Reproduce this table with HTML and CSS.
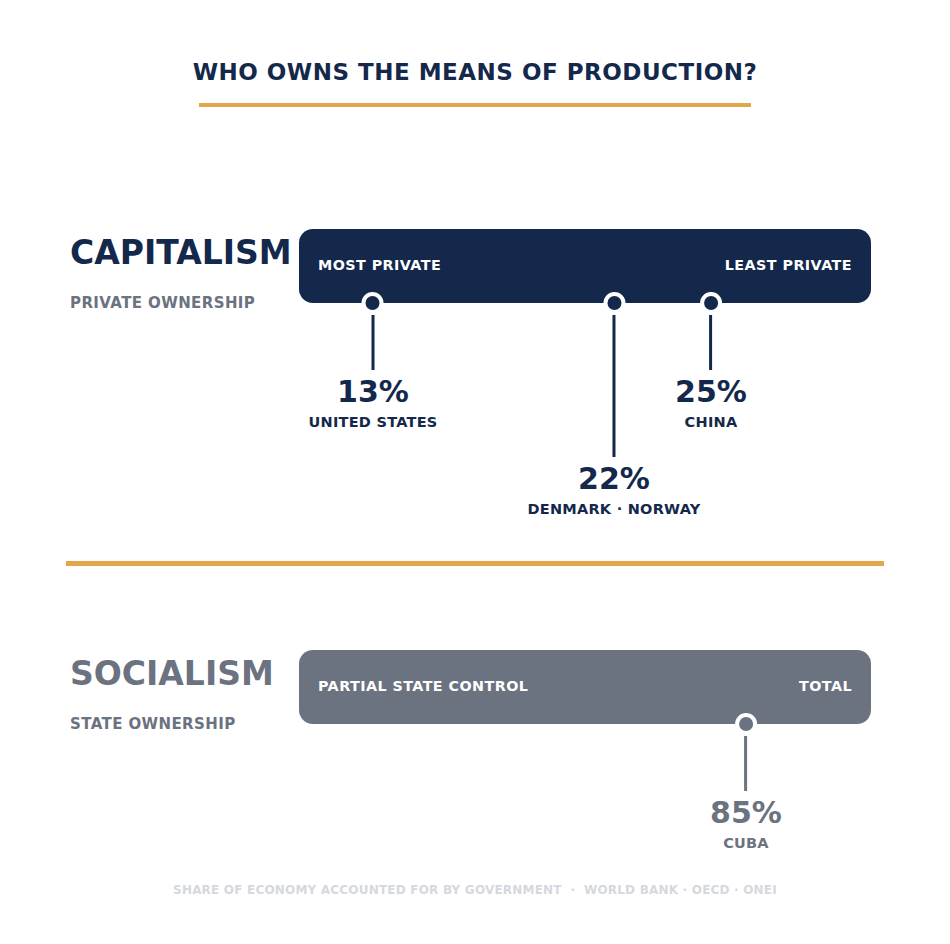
FILE: index.html
```html
<!DOCTYPE html>
<html lang="en">
<head>
<meta charset="utf-8">
<title>Who owns the means of production?</title>
<link rel="stylesheet" href="styles.css">
</head>
<body>
<main class="page">
  <header class="header">
    <h1 class="title">WHO OWNS THE MEANS OF PRODUCTION?</h1>
    <div class="title-rule"></div>
  </header>

  <section class="section section-cap">
    <div class="label-col">
      <h2 class="sys-name navy">CAPITALISM</h2>
      <p class="sys-sub">PRIVATE OWNERSHIP</p>
    </div>
    <div class="chart">
      <div class="bar bar-navy">
        <span>MOST PRIVATE</span>
        <span>LEAST PRIVATE</span>
      </div>
      <div class="marker navy" style="left: 74px;">
        <span class="dot"></span>
        <span class="stem stem-short"></span>
        <span class="value">13%</span>
        <span class="country">UNITED STATES</span>
      </div>
      <div class="marker navy" style="left: 315px;">
        <span class="dot"></span>
        <span class="stem stem-long"></span>
        <span class="value">22%</span>
        <span class="country">DENMARK · NORWAY</span>
      </div>
      <div class="marker navy" style="left: 412px;">
        <span class="dot"></span>
        <span class="stem stem-short"></span>
        <span class="value">25%</span>
        <span class="country">CHINA</span>
      </div>
    </div>
  </section>

  <div class="divider"></div>

  <section class="section section-soc">
    <div class="label-col">
      <h2 class="sys-name gray">SOCIALISM</h2>
      <p class="sys-sub">STATE OWNERSHIP</p>
    </div>
    <div class="chart">
      <div class="bar bar-gray">
        <span>PARTIAL STATE CONTROL</span>
        <span>TOTAL</span>
      </div>
      <div class="marker gray" style="left: 447px;">
        <span class="dot"></span>
        <span class="stem stem-short"></span>
        <span class="value">85%</span>
        <span class="country">CUBA</span>
      </div>
    </div>
  </section>

  <footer class="footer">SHARE OF ECONOMY ACCOUNTED FOR BY GOVERNMENT &nbsp;·&nbsp; WORLD BANK · OECD · ONEI</footer>
</main>
</body>
</html>
```

FILE: styles.css
```css
* { box-sizing: border-box; }

html, body {
  margin: 0;
  padding: 0;
  background: #ffffff;
}

body {
  font-family: "DejaVu Sans", "Liberation Sans", sans-serif;
  font-weight: bold;
}

.page {
  width: 950px;
  height: 944px;
  background: #ffffff;
  overflow: hidden;
}

.header {
  padding-top: 58px;
}

.title {
  margin: 0;
  text-align: center;
  font-size: 23px;
  line-height: 28px;
  letter-spacing: 0.5px;
  color: #14284b;
  font-weight: bold;
}

.title-rule {
  width: 552px;
  height: 4px;
  margin: 17px auto 0;
  background: #e3a64b;
}

.section {
  display: flex;
  margin-left: 70px;
}

.section-cap {
  margin-top: 122px;
  height: 332px;
}

.section-soc {
  margin-top: 84px;
  height: 200px;
}

.label-col {
  width: 229px;
  padding-top: 4px;
}

.sys-name {
  margin: 0;
  font-size: 33px;
  line-height: 40px;
  font-weight: bold;
}

.sys-sub {
  margin: 21px 0 0;
  font-size: 15px;
  line-height: 19px;
  letter-spacing: 0.4px;
  color: #6b7280;
}

.navy { color: #14284b; }
.gray { color: #6b7280; }

.chart {
  position: relative;
  width: 572px;
}

.bar {
  height: 74px;
  border-radius: 14px;
  padding: 0 19px 2px;
  display: flex;
  justify-content: space-between;
  align-items: center;
  color: #ffffff;
  font-size: 14.3px;
  letter-spacing: 0.45px;
}

.bar-navy { background: #14284b; }
.bar-gray { background: #6b7280; }

.marker {
  position: absolute;
  top: 63px;
  transform: translateX(-50%);
  display: flex;
  flex-direction: column;
  align-items: center;
  white-space: nowrap;
}

.dot {
  width: 22px;
  height: 22px;
  border-radius: 50%;
  border: 4px solid #ffffff;
  background: currentColor;
}

.stem {
  width: 3px;
  margin-top: 1px;
  background: currentColor;
}

.stem-short { height: 55px; }
.stem-long { height: 142px; }

.value {
  margin-top: 5px;
  font-size: 30px;
  line-height: 34px;
}

.country {
  margin-top: 4px;
  font-size: 14.5px;
  line-height: 18px;
  letter-spacing: 0.25px;
}

.divider {
  height: 5px;
  margin: 0 66px;
  background: #e3a64b;
}

.footer {
  margin-top: 32px;
  text-align: center;
  font-size: 12px;
  line-height: 16px;
  letter-spacing: 0.2px;
  color: #d5d8de;
}
```
